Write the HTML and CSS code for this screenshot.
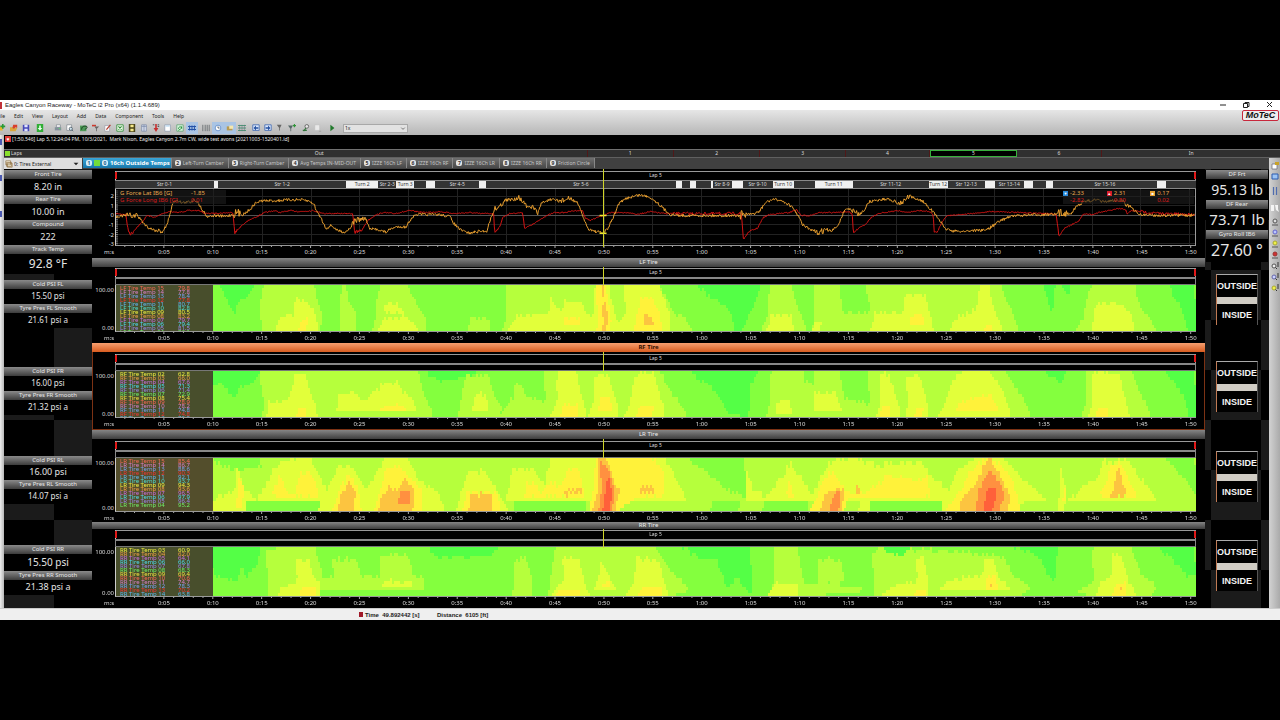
FILE: index.html
```html
<!DOCTYPE html>
<html lang="en">
<head>
<meta charset="utf-8">
<title>Eagles Canyon Raceway - MoTeC i2 Pro</title>
<link rel="stylesheet" href="styles.css">
</head>
<body>
<div class="app">
  <header class="titlebar">
    <span class="app-mark"></span>
    <h1 class="app-title">Eagles Canyon Raceway - MoTeC i2 Pro (x64) (1.1.4.689)</h1>
    <div class="window-buttons">
      <button aria-label="Minimize"><svg viewBox="0 0 8 8"><path d="M1 4h6"/></svg></button>
      <button aria-label="Restore"><svg viewBox="0 0 8 8"><path d="M1.5 2.5h4v4h-4zM3 2.500V1.500h4v4H5.500"/></svg></button>
      <button aria-label="Close"><svg viewBox="0 0 8 8"><path d="M2 1l5 5M7 1L2 6"/></svg></button>
    </div>
  </header>

  <div class="chrome">
    <div class="chrome-left">
      <nav class="menu">
        <button>File</button><button>Edit</button><button>View</button><button>Layout</button><button>Add</button><button>Data</button><button>Component</button><button>Tools</button><button>Help</button>
      </nav>
      <div class="toolbar">
        <div class="tool-group first">
          <button aria-label="New"><svg viewBox="0 0 10 10"><path fill="#e8b52c" d="M0 3h5l1 5H0z"/><path fill="#2a9a34" d="M5 0h2v2h2v2H7v2H5V4H3V2h2z"/></svg></button>
          <button aria-label="Open"><svg viewBox="0 0 10 10"><path fill="#d9a63a" d="M0 4h4l1 1h4L7 9H0z"/><path fill="#d8402c" d="M4 1h5v4L7 4 5 6 3 5z"/></svg></button>
          <button aria-label="Save"><svg viewBox="0 0 10 10"><path fill="#4648b8" d="M1 1h8v8H1z"/><path fill="#dfe3ff" d="M3 1h4v3H3zM3 6h4v3H3z"/></svg></button>
        </div>
        <div class="tool-group">
          <button aria-label="Download"><svg viewBox="0 0 10 10"><path fill="#2fae35" d="M1 0h8v10H1z"/><path fill="#eaffea" d="M4 2h2v3h2L5 8 2 5h2z"/></svg></button>
        </div>
        <div class="tool-group spaced">
          <button aria-label="Print"><svg viewBox="0 0 10 10"><path fill="#fff" stroke="#68727c" stroke-width=".7" d="M3 1h5v3H3z"/><path fill="#83919b" d="M1 4h8v4H1z"/><path fill="#5d6" d="M6 5h2v1H6z"/></svg></button>
          <button aria-label="Preview"><svg viewBox="0 0 10 10"><path fill="#fff" stroke="#68727c" stroke-width=".7" d="M1 1h6v7H1z"/><circle cx="6" cy="6" r="2" fill="#cfe4ee" stroke="#4c5a66"/><path stroke="#4c5a66" d="M7.500 7.500L9 9"/></svg></button>
        </div>
        <div class="tool-group">
          <button aria-label="Track"><svg viewBox="0 0 10 10"><path fill="#4f9a58" d="M0 2h8v7H0z"/><path fill="none" stroke="#143b1c" stroke-width="1.200" d="M2 7c0-4 3-5 6-4s-1 3-2 4"/></svg></button>
          <button aria-label="Channels"><svg viewBox="0 0 10 10"><path fill="#cc3a2e" d="M0 1h5v2H0z"/><path fill="#666" d="M3 3h6L6 6v3H5V6z"/></svg></button>
          <button aria-label="Edit data"><svg viewBox="0 0 10 10"><path fill="#fff" stroke="#889" stroke-width=".7" d="M1 2h6v7H1z"/><path stroke="#b23a2a" stroke-width="1.500" d="M3 7l5-6"/></svg></button>
          <button aria-label="Spreadsheet"><svg viewBox="0 0 10 10"><path fill="#eefbe9" stroke="#2a8a34" d="M1 1h8v8H1z"/><path stroke="#2a8a34" stroke-width="1.300" d="M3 3l4 4M7 3L3 7"/></svg></button>
          <button aria-label="Film"><svg viewBox="0 0 10 10"><path fill="#4b4418" d="M1 0h8v10H1z"/><path fill="#f6e98a" d="M3 1h4v3H3zM3 6h4v3H3z"/></svg></button>
          <button aria-label="Columns"><svg viewBox="0 0 10 10"><path fill="#e8eefa" stroke="#7080a0" stroke-width=".8" d="M2 1h6v8H2z"/><path stroke="#7080a0" stroke-width=".8" d="M2 3h6M4 1v8M6 1v8"/></svg></button>
          <button aria-label="Sensors"><svg viewBox="0 0 10 10"><path fill="#c53030" d="M4 0h2v5h2L5 10 2 5h2z"/><path stroke="#333" d="M1 1h2M7 1h2M7 3h2"/></svg></button>
          <button aria-label="Document"><svg viewBox="0 0 10 10"><path fill="#fff" stroke="#8292a8" stroke-width=".8" d="M1 1h7v8H1z"/><path fill="#8ec2e8" d="M2 2h5v1H2z"/></svg></button>
          <button aria-label="Refresh"><svg viewBox="0 0 10 10"><path fill="#d7f4dd" stroke="#4a9a60" stroke-width=".8" d="M1 1h8v8H1z"/><path fill="none" stroke="#24903a" stroke-width="1.200" d="M3 6c0-3 4-3 4-1M7 3v3M3 8l3-2"/></svg></button>
          <button aria-label="Overlay" class="on"><svg viewBox="0 0 10 10"><path fill="none" stroke="#2452a8" stroke-width="1.300" d="M0 3h10M0 7h10M2 2v6M5 2v6M8 2v6"/></svg></button>
        </div>
        <div class="tool-group">
          <button aria-label="Grid"><svg viewBox="0 0 10 10"><path stroke="#606468" d="M1 1v8M4 1v8M6.500 1v8M9 1v8"/></svg></button>
          <button aria-label="Time" class="on"><svg viewBox="0 0 10 10"><circle cx="5" cy="5" r="3.500" fill="#fff" stroke="#5a88c8"/><path fill="none" stroke="#345" d="M5 3v2h2"/></svg></button>
          <button aria-label="Distance" class="on"><svg viewBox="0 0 10 10"><path fill="#b89a50" d="M1 3h7v5H1z"/><path fill="#f5e7ae" d="M4 2h5v4H4z"/></svg></button>
          <button aria-label="Zones"><svg viewBox="0 0 10 10"><path stroke="#4d9a78" stroke-width="1.300" d="M0 2h10M0 5h10M0 8h10"/><path stroke="#667" stroke-width=".6" d="M2 1v8M5 1v8M8 1v8"/></svg></button>
        </div>
        <div class="tool-group">
          <button aria-label="Previous lap"><svg viewBox="0 0 10 10"><path fill="#dce8fc" stroke="#3c66b0" d="M1 1h8v7H1z"/><path fill="#2450a0" d="M2 5l3-3v2h3v2H5v2z"/></svg></button>
          <button aria-label="Next lap"><svg viewBox="0 0 10 10"><path fill="#dce8fc" stroke="#3c66b0" d="M1 1h8v7H1z"/><path fill="#2450a0" d="M8 5L5 2v2H2v2h3v2z"/></svg></button>
          <button aria-label="Filter"><svg viewBox="0 0 10 10"><path fill="#666" d="M1 1h6L5 5v3H4V5z"/></svg></button>
          <button aria-label="Add filter"><svg viewBox="0 0 10 10"><path fill="#566" d="M0 2h6L4 6v3H3V6z"/><path stroke="#2f9438" stroke-width="1.400" d="M6 2h4M8 0v4"/></svg></button>
        </div>
        <div class="tool-group">
          <button aria-label="Driver"><svg viewBox="0 0 10 10"><circle cx="6" cy="3" r="2.300" fill="#e8e8e8" stroke="#555"/><path stroke="#2f7438" stroke-width="1.400" d="M1 8h5M5 5L2 9"/></svg></button>
          <button aria-label="Notes"><svg viewBox="0 0 10 10"><path fill="#e9e9e9" stroke="#bbb" stroke-width=".6" d="M1 1h6v7H1z"/><path stroke="#999" d="M6 9h3"/></svg></button>
        </div>
        <div class="tool-group"><button aria-label="Play"><svg viewBox="0 0 10 10"><path fill="#217a2c" d="M3 1l5 4-5 4z"/></svg></button></div>
        <span class="speed"><select aria-label="Playback speed"><option>1x</option></select><svg viewBox="0 0 8 8"><path d="M2 3l2 2 2-2"/></svg></span>
      </div>
    </div>
    <span class="brand">MoTeC</span>
  </div>

  <div class="workspace">
    <aside class="rail-left"><i></i><i></i><i></i></aside>
    <div class="work">
      <p class="session"><span class="session-mark">♥</span><span>[1:50.546] Lap 5,12:24:04 PM, 10/3/2021,&nbsp; Mark Nixon, Eagles Canyon 2.7m CW, wide test avons [20211003-1520401.ld]</span></p>
      <div class="laps"><span class="laps-name">Laps</span><ol class="laps-track" id="laps"></ol></div>
      <div class="under-laps">
        <div class="sheet">
          <div class="tab-row">
            <span class="workbook"><svg viewBox="0 0 10 10"><path fill="#f6f0dc" stroke="#8a6a3a" stroke-width=".8" d="M1 1h6v5H1zM2 3h6v5H2zM3 4h6v5H3z"/></svg><select aria-label="Workbook"><option>0: Tires External</option></select><svg class="drop" viewBox="0 0 10 10"><path fill="#222" d="M1 3h8L5 7z"/></svg></span>
            <nav class="tabs" id="tabs"></nav>
          </div>
          <main class="panels">
            <div class="gauges gauges-left">
              <dl class="g-top">
                <dt>Front Tire</dt><dd>8.20 in</dd>
                <dt>Rear Tire</dt><dd>10.00 in</dd>
                <dt>Compound</dt><dd>222</dd>
                <dt>Track Temp</dt><dd class="t12 h20">92.8 °F</dd>
              </dl>
              <dl class="g-fl"><dt>Cold PSI FL</dt><dd class="t8 h15">15.50 psi</dd><dt>Tyre Pres FL Smooth</dt><dd class="t8 h15">21.61 psi a</dd></dl>
              <dl class="g-fr"><dt>Cold PSI FR</dt><dd class="t8 h15">16.00 psi</dd><dt>Tyre Pres FR Smooth</dt><dd class="t8 h15">21.32 psi a</dd></dl>
              <dl class="g-rl"><dt>Cold PSI RL</dt><dd class="h15">16.00 psi</dd><dt>Tyre Pres RL Smooth</dt><dd class="t8 h15">14.07 psi a</dd></dl>
              <dl class="g-rr"><dt>Cold PSI RR</dt><dd class="t10 h17">15.50 psi</dd><dt>Tyre Pres RR Smooth</dt><dd class="h15">21.38 psi a</dd></dl>
            </div>

            <div class="traces" id="traces"></div>

            <div class="gauges gauges-right">
              <dl class="r-top">
                <dt>DF Frt</dt><dd class="t14 h21">95.13 lb</dd>
                <dt>DF Rear</dt><dd class="t15 h21">73.71 lb</dd>
                <dt>Gyro Roll IB6</dt><dd class="t16 h23">27.60 °</dd>
              </dl>
              <div class="side s1"><b>OUTSIDE</b><hr><b>INSIDE</b></div>
              <div class="side s2"><b>OUTSIDE</b><hr><b>INSIDE</b></div>
              <div class="side s3"><b>OUTSIDE</b><hr><b>INSIDE</b></div>
              <div class="side s4"><b>OUTSIDE</b><hr><b>INSIDE</b></div>
            </div>
          </main>
        </div>
        <aside class="rail-right">
          <button aria-label="Properties"><svg viewBox="0 0 8 8"><path fill="#fff" stroke="#667" stroke-width=".7" d="M1 2h5v5H1z"/><path fill="#c9a227" d="M4 0h4v3H4z"/></svg></button>
          <button aria-label="Display"><svg viewBox="0 0 8 8"><path fill="#9cc4f4" stroke="#2c5cb0" d="M1 1h6v5H1z"/></svg></button>
          <button aria-label="Pause" class="tall"><svg viewBox="0 0 8 8"><path stroke="#4f6cae" stroke-width="1.200" d="M2.500 0v8M5.500 0v8"/></svg></button>
          <button aria-label="Cursor" class="tall"><svg viewBox="0 0 8 8"><path fill="#f4f4f4" d="M0 1h3v6H0zM4 1h3v4l1 3-3-2z"/></svg></button>
          <button aria-label="Find"><svg viewBox="0 0 8 8"><circle cx="4" cy="3" r="2" fill="#ddd" stroke="#555"/><path stroke="#555" d="M1 7h6"/></svg></button>
          <button aria-label="Find blue"><svg viewBox="0 0 8 8"><circle cx="4" cy="3" r="2" fill="#b9c6ff" stroke="#66c"/><path stroke="#555" d="M1 7h6"/></svg></button>
          <button aria-label="Find yellow"><svg viewBox="0 0 8 8"><circle cx="4" cy="3" r="2" fill="#eef04a" stroke="#aa3"/><path stroke="#555" d="M1 7h6"/></svg></button>
          <button aria-label="Find red"><svg viewBox="0 0 8 8"><circle cx="4" cy="3" r="2" fill="#d03030" stroke="#933"/><path stroke="#555" d="M1 7h6"/></svg></button>
          <button aria-label="Zoom in"><svg viewBox="0 0 8 8"><circle cx="3" cy="4" r="2" fill="#eee" stroke="#555"/><path stroke="#333" d="M4.500 5.500L6 7M7 0v5"/></svg></button>
          <button aria-label="Zoom out"><svg viewBox="0 0 8 8"><circle cx="3" cy="4" r="2" fill="#ccd4ff" stroke="#66a"/><path stroke="#333" d="M4.500 5.500L6 7M7 0v5"/></svg></button>
          <button aria-label="Zoom fit"><svg viewBox="0 0 8 8"><circle cx="3" cy="4" r="2" fill="#eef04a" stroke="#aa3"/><path stroke="#333" d="M4.500 5.500L6 7M7 0v5"/></svg></button>
        </aside>
      </div>
    </div>
  </div>

  <footer class="status"><span class="status-mark"></span><span class="status-time">Time&nbsp; 49.892442 [s]</span><span class="status-dist">Distance&nbsp; 6105 [ft]</span></footer>
</div>
<script src="app.js"></script>
</body>
</html>
```
FILE: styles.css
```css
* { box-sizing: border-box; }

body {
  margin: 0;
  min-height: 100vh;
  display: flex;
  flex-direction: column;
  justify-content: center;
  background: #000;
  color: #ddd;
  font: 6px/8px "Noto Sans", "Open Sans", sans-serif;
  overflow-x: hidden;
}

button, select { font: inherit; color: inherit; border: 0; padding: 0; margin: 0; background: none; }
h1, h2, p, dl, dd, ol { margin: 0; padding: 0; }
ol { list-style: none; }
svg { display: block; }

.app { width: 100%; }

/* window frame */
.titlebar {
  display: flex;
  align-items: center;
  height: 10px;
  background: #fff;
  color: #222;
}
.app-mark { width: 2px; height: 7px; background: #c03038; margin-right: 3px; }
.app-title { font: 400 6px/8px "Liberation Sans", sans-serif; }
.window-buttons { margin-left: auto; display: flex; gap: 15px; padding-right: 7px; }
.window-buttons svg { width: 8px; height: 8px; fill: none; stroke: #222; stroke-width: 1; }

.chrome {
  display: flex;
  justify-content: space-between;
  height: 25px;
  background: linear-gradient(#e6e6e6, #b6b6b6);
  color: #222;
}
.menu { display: flex; gap: 9px; height: 12px; font-size: 5px; line-height: 11px; margin-left: -3px; }
.brand {
  align-self: flex-start;
  margin: 0 1px;
  width: 37px;
  height: 11px;
  border: 1px solid #c8283c;
  border-radius: 2px;
  background: #eee;
  color: #111;
  font: italic 700 9px/9px "Liberation Sans", sans-serif;
  text-align: center;
}
.toolbar { display: flex; align-items: center; gap: 2px; height: 12px; }
.tool-group { display: flex; }
.tool-group.first { margin-left: -4px; }
.tool-group.spaced { margin-left: 4px; }
.toolbar button { width: 12px; height: 12px; display: grid; place-items: center; }
.toolbar button.on { background: #a9c4e4; }
.toolbar svg { width: 8px; height: 8px; }
.speed {
  display: flex;
  align-items: center;
  width: 65px;
  height: 9px;
  margin-left: 3px;
  border: 1px solid #a8a8a8;
  background: #e2e2e2;
}
.speed select { flex: 1; height: 7px; padding-left: 1px; font-size: 5px; line-height: 7px; appearance: none; }
.speed svg { width: 8px; height: 7px; fill: none; stroke: #666; }

/* workspace */
.workspace { display: flex; background: #000; }
.rail-left {
  flex: none;
  width: 4px;
  background: linear-gradient(90deg, #eee, #b8b8b8);
  display: flex;
  flex-direction: column;
  gap: 30px;
  padding-top: 4px;
}
.rail-left i { width: 2px; height: 6px; background: #4a58b0; }
.work { flex: 1; min-width: 0; }
.session { display: flex; gap: 1px; height: 14px; font-size: 5px; line-height: 8px; color: #eee; padding-left: 1px; white-space: nowrap; }
.session-mark { width: 6px; height: 6px; margin-top: 1px; background: #e03a34; color: #fff; line-height: 6px; text-align: center; }
.laps { display: flex; height: 9px; background: #303030; border-top: 1px solid #707070; border-bottom: 1px solid #606060; line-height: 7px; font-size: 5px; }
.laps-name { width: 48px; }
.laps-name::before { content: ""; display: inline-block; width: 5px; height: 5px; margin: 0 1px; background: #8ae02c; vertical-align: middle; }
.laps-track { flex: 1; display: flex; }
.laps-track li { text-align: center; border-right: 1px solid #501818; overflow: hidden; min-width: 0; }
.laps-track li.current { border: 1px solid #38b03c; background: #000; line-height: 5px; }
.laps-track li:last-child { border: 0; }
.under-laps { display: flex; }
.sheet { flex: 1; min-width: 0; }
.rail-right { flex: none; width: 11px; padding-top: 2px; background: linear-gradient(90deg, #d2d2d2, #aaa); }
.rail-right button { display: grid; place-items: center; width: 11px; height: 11px; }
.rail-right button.tall { height: 17px; }
.rail-right svg { width: 8px; height: 8px; }

.tab-row { display: flex; height: 11px; background: #404040; }
.workbook { display: flex; align-items: center; width: 78px; margin-right: 1px; height: 11px; background: #dedede; color: #222; }
.workbook svg { width: 8px; height: 8px; margin: 0 1px; }
.workbook .drop { width: 6px; height: 6px; margin-right: 3px; }
.workbook select { flex: 1; min-width: 0; height: 11px; font-size: 5px; line-height: 10px; appearance: none; }
.tabs { display: flex; height: 11px; font-size: 5px; }
.tabs button {
  display: flex;
  align-items: center;
  gap: 2px;
  height: 10px;
  padding: 0 4px 0 3px;
  border-right: 1px solid #888;
  background: linear-gradient(#707070, #484848);
  color: #c8c8c8;
  white-space: nowrap;
}
.tabs button.active { background: linear-gradient(#3aa6d8, #1878ac); color: #fff; font-weight: 700; font-size: 6px; padding: 0 1px 0 3px; }
.tabs .num { width: 6px; height: 6px; border-radius: 2px; background: #e4e4e4; color: #333; font-size: 5px; font-weight: 700; line-height: 6px; text-align: center; }
.tabs .active .num { background: #d6ecf8; color: #14608c; }
.tabs .lamp { width: 6px; height: 6px; background: #72dc3a; }

.panels { display: flex; }

/* gauges */
.gauges {
  flex: none;
  text-align: center;
  --lit: #1b1b1b;
  background: conic-gradient(#000 25%, var(--lit) 0 50%, #000 0 75%, var(--lit) 0) 0 1px / 100px 100px;
}
.gauges dl { background: #000; }
.gauges dt { height: 9px; line-height: 8px; font-size: 6px; background: linear-gradient(#8a8a8a, #3c3c3c); color: #e8e8e8; white-space: nowrap; }
.gauges dd { height: 16px; line-height: 15px; font-size: 9px; color: #e4e4e4; white-space: nowrap; }
.gauges .t8 { font-size: 8px; }
.gauges .t10 { font-size: 10px; }
.gauges .t12 { font-size: 12px; }
.gauges .t14 { font-size: 14px; }
.gauges .t15 { font-size: 15px; }
.gauges .t16 { font-size: 16px; }
.gauges .h15 { height: 15px; line-height: 14px; }
.gauges .h17 { height: 17px; line-height: 17px; }
.gauges .h20 { height: 20px; line-height: 20px; }
.gauges .h21 { height: 21px; line-height: 21px; }
.gauges .h23 { height: 23px; line-height: 23px; }
.gauges-left { width: 88px; padding-top: 1px; }
.g-fl { margin-top: 6px; }
.g-fr { margin-top: 39px; }
.g-rl { margin-top: 41px; }
.g-rr { margin-top: 41px; }
.gauges-right { width: 64px; padding: 1px 1px 0; background-position: 6px 1px; }
.side {
  width: 42px;
  margin: 0 auto;
  border-top: 1px solid #aaa;
  border-right: 1px solid #555;
  border-left: 1px solid #c07a54;
  background: #000;
  color: #f4f4f4;
  font: 700 9px/22px "Liberation Sans", sans-serif;
  height: 51px;
}
.side b { display: block; height: 22px; }
.side hr { height: 7px; margin: 0; border: 0; background: #d0ccc4; }
.s1 { margin-top: 12px; }
.s2 { margin-top: 36px; }
.s3 { margin-top: 39px; }
.s4 { margin-top: 38px; }

/* traces */
.traces { flex: 1; min-width: 0; }
.trace-title { height: 9px; font-size: 6px; line-height: 8px; font-weight: 400; text-align: center; background: linear-gradient(#858585, #3e3e3e); color: #eee; }
.trace-body { position: relative; margin: 0 9px 0 23px; padding-top: 2px; }
.trace-lf .trace-body, .trace-rr .trace-body { padding-top: 1px; }
.trace-rr .trace-title { height: 7px; line-height: 6px; }
.trace.active { box-shadow: inset 0 0 0 1px #7c3214; }
.trace.active .trace-title { background: linear-gradient(#f8a070, #d85c20); color: #301000; font-weight: 700; }
.lapbar { display: flex; justify-content: center; height: 9px; border: 1px solid #999; border-bottom: 0; border-left-color: #ccc; line-height: 7px; font-size: 5px; position: relative; }
.lapbar::before, .lapbar::after { content: ""; position: absolute; top: 0; left: -1px; width: 2px; height: 7px; background: #e01818; }
.lapbar::after { left: auto; right: -1px; }
.band { height: 8px; border: 1px solid #888; border-top-width: 2px; border-bottom-color: #777; }
.sections { display: flex; height: 9px; border: solid #888; border-width: 1px 0; background: #333; line-height: 7px; font-size: 5px; }
.sections span { overflow: hidden; text-align: center; white-space: nowrap; }
.sections .corner { background: #f0f0f0; color: #333; }
.plot { position: relative; overflow: hidden; border-left: 1px solid #ccc; border-bottom: 1px solid #999; }
.plot canvas, .plot svg { display: block; width: 100%; height: 100%; }
.plot canvas { image-rendering: pixelated; }
.plot-g { height: 57px; border-right: 1px solid #999; }
.plot-lf, .plot-rf { height: 47px; }
.plot-lr { height: 54px; }
.plot-rr { height: 50px; }
.axis { position: relative; height: 11px; }
.axis-g, .axis-rf { height: 12px; }
.axis-lr { height: 10px; }
.axis svg { width: 100%; height: 3px; }
.axis span { position: absolute; top: 2px; line-height: 8px; transform: translateX(-50%); }
.axis .unit { transform: none; left: -11px; }
.ylab { position: absolute; right: calc(100% + 1px); line-height: 6px; }
.ylab.hi { top: 2px; }
.ylab.lo { bottom: 1px; }
.plot-wrap { position: relative; }
.cursor { position: absolute; top: 0; bottom: 11px; left: 45.1%; width: 1px; background: #d0d428; }
.trace.heat .cursor { bottom: auto; height: 19px; }
.legend {
  position: absolute;
  inset: 0 auto 0 0;
  width: 9%;
  padding: 1px 0 0 4px;
  background: rgba(55, 28, 40, .78);
  overflow: hidden;
}
.legend li { display: flex; height: 4px; line-height: 5px; white-space: nowrap; }
.legend li span:first-child { width: 58px; }
.readout { position: absolute; top: 1px; left: 0; width: 110px; padding-left: 4px; background: rgba(30, 30, 30, .6); }
.readout div { display: flex; height: 7px; line-height: 7px; white-space: nowrap; }
.readout div span:first-child { width: 71px; }
.lat { color: #e8a850; }
.long { color: #d81c1c; }
.stats { position: absolute; top: 1px; right: 1px; width: 131px; display: grid; grid-template-columns: repeat(3, 1fr); background: rgba(30, 30, 30, .6); line-height: 7px; }
.stats span { padding-left: 7px; position: relative; }
.stats span::before { position: absolute; left: 0; top: 1px; width: 5px; height: 5px; line-height: 5px; font-size: 4px; color: #fff; text-align: center; }
.stats .min::before { content: "▼"; background: #2888d8; }
.stats .max::before { content: "▲"; background: #d81c28; }
.stats .avg::before { content: "■"; background: #e8a030; }

/* status bar */
.status { display: flex; align-items: center; height: 12px; padding-left: 359px; background: #efefef; border-top: 1px solid #ccc; color: #222; font: 700 6px/10px "Liberation Sans", sans-serif; }
.status-mark { width: 4px; height: 5px; margin-right: 2px; background: #a01828; }
.status-time { width: 72px; }
```
FILE: app.js
```js
const START = 116, END = 1196, SPAN = END - START;
const el = (tag, cls, html = '') => {
  const n = document.createElement(tag);
  if (cls) n.className = cls;
  n.innerHTML = html;
  return n;
};

let seed = 7;
const rnd = () => { seed = (seed * 16807) % 2147483647; return seed / 2147483647; };

/* lap strip: label, relative length */
[['Out', 538], ['1', 86], ['2', 86], ['3', 85], ['4', 84], ['5', 85], ['6', 85], ['In', 179]].forEach(([name, w]) => {
  const li = el('li', name === '5' ? 'current' : '', name);
  li.style.flex = w + ' 0 0';
  document.getElementById('laps').append(li);
});

['16ch Outside Temps', 'Left-Turn Camber', 'Right-Turn Camber', 'Avg Temps IN-MID-OUT', 'IZZE 16Ch LF', 'IZZE 16Ch RF',
  'IZZE 16Ch LR', 'IZZE 16Ch RR', 'Friction Circle'].forEach((t, i) => {
  const extra = i ? '' : '<span class="lamp"></span><span class="num">0</span>';
  document.getElementById('tabs').append(el('button', i ? '' : 'active', `<span class="num">${i + 1}</span>${extra}${t}`));
});

/* track sections: label, end position, corner flag */
const sections = [['Str 0-1', 215], ['', 219, 1], ['Str 1-2', 347], ['Turn 2', 379, 1], ['Str 2-3', 397], ['Turn 3', 415, 1], ['', 427],
  ['', 436, 1], ['Str 4-5', 480], ['', 487, 1], ['Str 5-6', 676], ['', 682, 1], ['', 690], ['', 696, 1], ['', 711], ['', 713, 1],
  ['Str 8-9', 732], ['', 743, 1], ['Str 9-10', 773], ['Turn 10', 794, 1], ['', 815], ['Turn 11', 853, 1], ['Str 11-12', 929],
  ['Turn 12', 948, 1], ['Str 12-13', 985], ['', 995, 1], ['Str 13-14', 1024], ['', 1033, 1], ['', 1046], ['', 1053, 1],
  ['Str 15-16', 1157], ['', 1166, 1], ['', 1196]];

/* lateral and longitudinal g: x,y pairs, plot rows 189..246 */
const lat = '116,217 126,216 138,216 142,222 148,228 155,231 162,232 167,226 170,214 173,203 177,200 182,203 190,202 195,199 200,206 207,217 215,216 225,217 233,215 237,213 243,215 250,210 256,203 262,201 275,201 290,200 300,200 308,201 314,204 317,212 321,218 326,229 332,226 337,231 345,233 350,229 355,221 360,220 366,219 370,230 378,230 386,233 392,229 400,227 406,228 412,218 418,215 430,215 440,215 450,217 455,225 461,231 470,234 480,232 487,232 490,222 495,209 500,207 505,201 512,200 519,197 524,203 529,209 534,207 538,214 542,203 550,200 560,201 570,199 577,202 582,213 588,229 595,232 603,234 608,230 615,215 619,204 628,198 640,195 650,197 658,203 665,210 671,215 680,216 700,216 720,216 741,216 743,215 752,215 760,212 766,203 772,200 780,200 790,205 797,213 803,225 810,230 818,234 825,231 832,232 838,227 843,216 846,209 852,210 857,214 860,215 865,210 870,202 880,200 890,199 900,204 905,201 909,197 917,199 923,201 930,208 936,215 940,220 945,229 955,232 965,232 975,231 985,231 990,229 1000,222 1010,217 1020,216 1040,215 1058,215 1062,213 1067,214 1073,213 1078,206 1085,202 1095,200 1105,202 1115,201 1122,200 1128,205 1134,210 1141,215 1160,216 1180,216 1196,216';
const long = '116,214 126,215 128,231 131,235 136,229 142,223 147,216 155,218 162,214 170,212 178,213 188,211 200,211 205,214 233,213 235,234 240,228 247,222 255,218 265,213 275,211 280,213 290,211 300,212 313,211 325,214 340,214 353,214 355,234 362,231 368,221 375,216 383,213 395,214 410,211 425,213 440,212 455,214 470,213 480,214 494,214 495,233 500,228 503,218 510,214 523,213 525,229 535,224 545,217 555,213 565,213 575,211 583,211 586,219 591,221 600,217 612,213 630,213 638,215 650,212 665,214 742,214 744,240 750,232 758,229 764,218 770,215 780,214 790,213 797,210 802,216 810,216 820,213 835,213 850,212 853,215 854,234 860,228 866,225 872,218 880,214 890,212 900,211 907,213 920,211 930,212 934,215 935,233 938,233 943,222 948,216 960,215 975,214 990,212 1000,212 1020,213 1050,214 1057,215 1060,238 1065,229 1073,225 1080,221 1085,214 1093,215 1100,213 1110,211 1120,209 1127,210 1128,215 1132,211 1142,212 1160,214 1196,215';
/* spans where the signal is rough: from, to, amplitude */
const latRough = [[126, 140, 6], [158, 166, 6], [190, 196, 5], [234, 240, 8], [352, 364, 6], [494, 536, 5], [555, 572, 6], [600, 606, 4], [741, 747, 9], [815, 828, 6], [852, 860, 7], [900, 912, 5], [1058, 1068, 9], [1123, 1132, 6]];
const longRough = [[126, 133, 4], [235, 238, 4], [355, 362, 5], [672, 741, 3], [742, 746, 5], [1058, 1062, 4], [1142, 1196, 3]];

function linePath(text, base, spots) {
  const p = text.split(' ').map(s => s.split(',').map(Number));
  let d = '', k = 0;
  for (let x = START; x <= END; x += 0.7) {
    while (k < p.length - 2 && p[k + 1][0] < x) k++;
    const [x0, y0] = p[k], [x1, y1] = p[k + 1];
    const y = y0 + (y1 - y0) * Math.min(1, (x - x0) / (x1 - x0));
    const r = spots.find(s => x >= s[0] && x <= s[1]);
    const a = r ? r[2] : base;
    d += (d ? 'L' : 'M') + (x - START).toFixed(1) + ' ' + (y - 189 + (rnd() - 0.5) * a).toFixed(1);
  }
  return d;
}

/* temperature bands, low to high */
const scale = [[84, 255, 70], [132, 255, 62], [182, 255, 60], [226, 255, 58], [255, 242, 58], [252, 196, 64], [255, 144, 64], [255, 96, 58]];

/* each region: band, then x,y corners; y is percent of plot height */
const heat = {
  lf: [1, [
    '0 222,0 256,0 248,25 237,40 232,65 228,30', '2 262,100 258,60 265,0 316,0 320,60 320,100', '2 340,100 339,60 344,0 348,0 350,40 355,60 355,100',
    '2 372,100 376,40 382,0 410,0 420,55 425,75 425,100', '3 275,100 278,70 292,65 296,30 304,30 312,50 318,100', '4 298,100 300,72 306,72 306,100', '3 378,100 382,70 400,70 400,50 405,70 420,100', '3 383,60 386,40 397,40 400,60',
    '2 467,100 470,70 487,70 490,100', '2 502,100 505,60 508,0 662,0 673,60 682,70 692,100', '3 507,100 515,65 540,65 547,60 552,30 560,60 565,35 580,35 585,60 593,70 597,0 612,0 612,40 618,100', '3 612,100 625,60 626,0 662,0 668,60 670,100',
    '4 563,85 563,68 578,68 578,85', '4 596,100 598,0 608,0 610,100', '5 602,100 601,45 606,40 606,100', '5 603,20 603,0 605,0 605,20', '4 633,100 636,60 642,30 653,30 658,60 661,100', '5 642,85 642,62 647,65 652,85',
    '0 697,0 762,0 757,30 748,60 742,100 733,100 730,60 715,30', '2 760,100 768,60 772,0 793,0 798,60 807,100', '3 766,100 770,65 790,65 793,100', '2 812,100 812,70 816,0 842,0 842,60 870,60 868,0 1003,0 1010,50 1018,100',
    '3 870,100 873,60 903,60 907,20 927,20 928,60 933,100', '4 908,85 908,65 923,65 923,85', '3 948,100 955,70 975,55 982,0 991,0 994,60 1003,100', '4 983,100 985,85 992,85 992,100', '3 812,100 814,80 820,80 820,100',
    '0 1045,0 1057,0 1054,50 1050,50', '0 1062,0 1073,0 1070,20', '2 1075,100 1085,50 1093,0 1137,0 1140,50 1157,100', '3 1091,100 1092,60 1100,40 1118,40 1130,60 1133,100', '0 1170,0 1196,0 1196,100 1187,100 1180,45']],
  rf: [1, [
    '0 213,0 263,0 255,25 240,35 233,60 225,30 213,25', '2 262,100 262,0 420,0 425,60 433,100', '3 266,100 267,65 285,65 293,40 297,5 308,5 310,50 317,100', '4 296,100 297,80 305,80 305,100', '3 335,88 338,50 355,45 362,70 372,50 380,40 380,25 400,25 402,45 412,60 415,88', '4 378,88 383,75 402,75 405,88',
    '0 427,0 480,0 470,12 440,20', '2 457,100 460,60 468,10 490,10 495,60 500,80 500,100', '3 470,88 474,50 484,50 488,88', '2 500,100 505,70 513,60 514,30 523,30 525,60 547,65 547,100', '2 545,100 545,0 662,0 672,50 687,100', '3 549,100 556,60 560,0 578,0 581,50 585,100', '4 560,100 562,70 577,70 578,100', '3 588,100 593,50 595,10 610,10 614,50 618,100', '4 597,85 599,55 609,55 610,85',
    '3 623,100 630,60 637,5 656,5 660,60 664,100', '4 635,100 638,78 652,78 652,100', '0 690,0 760,0 750,40 747,100 725,90 715,40', '2 766,100 770,40 773,0 842,0 844,60 869,70 869,0 1008,0 1020,50 1031,100', '1 806,20 806,0 815,0 815,30', '3 774,95 776,65 788,65 791,95', '3 812,90 815,45 835,50 841,90', '1 843,60 843,0 869,0 869,60',
    '3 876,100 880,50 881,5 891,5 895,50 900,100', '4 879,100 881,75 889,75 890,100', '3 905,100 908,10 922,10 925,60 928,100', '4 914,100 915,80 922,80 922,100', '3 938,100 945,60 955,20 965,0 990,0 998,20 1005,60 1010,100', '4 953,88 960,65 978,52 990,52 998,88',
    '0 1046,0 1070,0 1062,20 1050,10', '2 1081,100 1086,40 1088,0 1134,0 1140,50 1150,100', '3 1088,100 1092,50 1095,0 1122,10 1124,60 1129,100', '4 1095,100 1097,80 1106,80 1108,100', '0 1167,0 1196,0 1196,100 1188,100 1180,40']],
  lr: [2, [
    '1 213,0 262,0 262,15 240,25 220,12', '3 213,100 213,80 233,60 237,15 243,60 257,80 267,40 283,5 312,0 318,30 325,60 327,50 340,15 353,20 363,60 380,20 385,0 410,0 417,40 433,60 447,100', '4 236,95 237,40 241,40 243,95', '4 270,75 278,30 287,65 293,70 299,30 312,30 318,75', '1 247,100 247,84 320,84 320,100', '4 333,100 340,50 348,35 355,50 363,100', '4 375,100 380,50 385,20 400,15 412,40 420,60 423,100', '5 339,100 340,65 348,50 354,65 355,100',
    '5 380,100 380,75 386,60 386,38 388,60 397,60 402,38 409,45 414,70 414,100', '6 398,90 399,60 408,60 410,90', '3 457,100 460,60 470,25 485,25 495,60 510,100', '4 463,100 466,65 497,65 501,100', '5 470,100 470,68 490,68 493,100', '3 505,82 509,40 513,20 533,20 543,50 553,0 665,0 670,20 687,82', '1 515,100 515,84 587,84 587,100', '4 523,75 525,45 535,50 540,70 546,50 562,50 567,20 578,20 583,75', '4 590,100 592,50 597,0 653,0 663,20 662,75 633,78 620,100',
    '5 593,100 597,50 600,0 608,0 613,50 620,60 616,85 617,100', '6 600,100 600,10 607,10 612,60 614,100', '7 604,100 604,40 608,40 611,75 611,100', '5 563,68 565,60 580,58 580,68', '5 637,68 640,56 653,54 653,68', '1 690,0 745,0 745,75 725,60 705,25', '1 712,100 712,84 740,84 740,100', '3 745,80 745,20 752,60 768,75 778,40 792,10 800,35 809,70 823,30 833,5 854,0 878,15 922,5 933,40 947,60 960,20 978,0 1005,0 1022,40 1046,80 1020,85 1020,100 860,100 860,82 810,82',
    '1 764,100 764,84 809,84 809,100', '1 871,100 871,84 943,84 943,100', '4 785,75 787,40 793,75', '4 810,100 823,40 833,25 843,60 864,70 885,35 915,40 926,35 930,76 847,78 845,100', '4 946,100 960,60 967,30 988,0 1000,10 1008,30 1015,70 1022,100', '5 821,100 824,70 835,55 843,65 843,100', '6 831,100 833,65 840,65 840,100', '5 855,75 855,52 858,52 858,75',
    '5 960,100 962,70 974,50 988,3 993,3 1005,60 1010,75 1008,100', '6 976,100 977,65 986,30 994,30 1004,70 1000,100', '7 985,100 985,60 993,55 996,75 993,100', '3 1058,100 1060,5 1064,60 1066,100', '3 1066,82 1084,50 1100,30 1105,5 1130,5 1140,40 1157,82', '4 1062,80 1063,50 1065,80', '4 1098,75 1108,30 1112,10 1122,10 1130,50 1136,75', '5 1108,75 1112,55 1116,22 1120,22 1122,55 1126,75', '1 1167,0 1196,0 1196,80 1185,40']],
  rr: [1, [
    '0 213,0 262,0 258,40 250,50 245,60 240,40 235,70 228,65 213,60', '2 267,100 267,10 280,0 317,0 322,60 423,60 423,88 320,88 320,100', '3 277,100 280,80 295,75 298,25 310,25 312,60 319,75 319,100', '4 299,100 300,82 315,82 315,100', '2 332,60 334,25 358,25 360,60', '2 378,65 382,15 410,15 413,65', '3 380,82 384,68 410,68 410,82', '0 427,0 500,0 490,20 440,22', '2 511,100 515,25 528,25 532,100', '2 547,100 550,60 557,0 658,0 668,40 688,88 672,100',
    '3 551,100 555,80 563,70 564,25 580,25 583,75 590,100', '4 555,100 557,86 580,86 580,100', '3 592,90 598,60 603,30 608,60 617,90', '4 600,84 602,70 607,70 609,84', '3 625,100 632,70 638,25 660,25 662,70 668,100', '4 636,100 640,84 660,84 662,100', '0 683,0 752,0 750,100 742,80 735,60 725,85 718,30 700,20', '2 768,100 772,70 776,0 800,0 802,75 860,80 860,92 804,100', '3 768,100 772,75 796,75 798,100', '2 817,75 818,25 842,25 843,75', '2 873,100 873,20 880,0 990,15 1005,20 1012,60 1029,82 1020,100', '0 885,0 912,0 905,18 890,12',
    '3 881,100 890,80 915,70 918,22 925,22 928,100', '4 914,100 916,85 926,85 926,100', '3 938,85 950,65 983,55 986,22 994,22 997,60 1008,85', '4 984,85 986,58 994,58 996,85', '5 989,82 989,70 991,70 991,82', '0 1015,0 1060,0 1055,60 1050,70 1040,20', '2 1076,92 1092,70 1095,0 1132,0 1140,50 1155,85 1150,100 1092,100', '3 1095,100 1098,75 1112,60 1113,15 1123,15 1127,70 1137,100', '4 1112,100 1114,75 1124,75 1126,100', '5 1118,90 1118,80 1121,80 1121,90', '0 1157,0 1196,0 1196,60 1185,55 1175,30']]
};

function inside(poly, x, y) {
  let hit = false;
  for (let i = 0, j = poly.length - 1; i < poly.length; j = i++) {
    const [xi, yi] = poly[i], [xj, yj] = poly[j];
    if ((yi > y) !== (yj > y) && x < (xj - xi) * (y - yi) / (yj - yi) + xi) hit = !hit;
  }
  return hit;
}

function paintHeat(canvas, [base, regions]) {
  const cols = 540, rows = 16;
  canvas.width = cols;
  canvas.height = rows;
  const shapes = regions.map(r => {
    const [band, ...pts] = r.split(' ');
    return [+band, pts.map(p => p.split(',').map(Number))];
  });
  const ctx = canvas.getContext('2d');
  const img = ctx.createImageData(cols, rows);
  for (let c = 0; c < cols; c++) {
    const lift = (rnd() - 0.5) * 10;
    for (let r = 0; r < rows; r++) {
      const x = START + (c + 0.5) * SPAN / cols + Math.sin(r * 12.9 + base) * 1.6;
      const y = Math.max(1, Math.min(99, (r + 0.5) * 100 / rows + (r < 12 ? lift : 0)));
      let band = base;
      for (const [b, poly] of shapes) if (inside(poly, x, y)) band = b;
      img.data.set([...scale[band], 255], (r * cols + c) * 4);
    }
  }
  ctx.putImageData(img, 0, 0);
}

const legendColors = ['#7ca0f0', '#f03838', '#60b8f0', '#50dcd0', '#f0f040', '#f0a048', '#c870e0', '#50dcf0', '#9888e8', '#70f068', '#f0e040', '#f86858', '#d880c8'];
const readings = {
  lf: [15, -1, '79.8 77.8 78.4 77.8 80.7 82.8 80.5 83.2 79.7 79.4 81.5 83.1'],
  rf: [2, 1, '62.8 66.0 67.6 71.3 71.4 72.9 75.4 78.9 78.2 74.8 74.8 72.9'],
  lr: [15, -1, '85.4 86.7 88.6 90.3 92.1 93.7 94.3 93.6 96.5 97.9 96.4 95.2'],
  rr: [3, 1, '60.9 62.0 64.1 66.0 67.8 68.3 69.4 70.6 74.7 78.3 70.2 63.8']
};

function axis(id) {
  let marks = '';
  for (let t = 1; t <= 110; t++) marks += `M${(t / 110.546 * SPAN).toFixed(1)} 0V${t % 5 ? 1 : 2}`;
  const a = el('div', 'axis axis-' + id, `<svg viewBox="0 0 1080 3" preserveAspectRatio="none"><path d="${marks}" stroke="#aaa"/></svg><span class="unit">m:s</span>`);
  for (let t = 5; t <= 110; t += 5) {
    const s = el('span', '', Math.floor(t / 60) + ':' + String(t % 60).padStart(2, '0'));
    s.style.left = (t / 110.546 * 100).toFixed(2) + '%';
    a.append(s);
  }
  return a;
}

const traces = document.getElementById('traces');

/* g-force chart */
{
  const sec = el('section', 'trace');
  const body = el('div', 'trace-body', '<div class="lapbar">Lap 5</div>');
  const bar = el('div', 'sections');
  let from = START;
  sections.forEach(([name, to, corner]) => {
    const s = el('span', corner ? 'corner' : '', name);
    s.style.flex = (to - from) + ' 0 0';
    from = to;
    bar.append(s);
  });
  let grid = '';
  for (let t = 5; t <= 110; t += 5) grid += `M${(t / 110.546 * SPAN).toFixed(1)} 0V57`;
  for (let y = 7.5; y < 57; y += 9.6) grid += `M0 ${y.toFixed(1)}H1080`;
  let ticks = '';
  for (let y = 2; y < 57; y += 1.92) ticks += `M0 ${y.toFixed(1)}H2`;
  const wrap = el('div', 'plot-wrap');
  const plot = el('div', 'plot plot-g', `<svg viewBox="0 0 1080 57" preserveAspectRatio="none" fill="none">
    <path d="${grid}" stroke="#222" shape-rendering="crispEdges"/><path d="${ticks}" stroke="#ccc" stroke-width=".6"/>
    <path d="M0 27H1080" stroke="#555"/>
    <path d="${linePath(long, 1.2, longRough)}" stroke="#d81414"/>
    <path d="${linePath(lat, 3, latRough)}" stroke="#eaa030"/>
    <path d="M484 27h7M484 45h7" stroke="#f0e830" stroke-width="1.500"/></svg>
    <div class="readout"><div class="lat"><span>G Force Lat IB6 [G]</span><span>-1.85</span></div><div class="long"><span>G Force Long IB6 [G]</span><span>0.01</span></div></div>
    <div class="stats"><span class="lat min">-2.33</span><span class="lat max">2.31</span><span class="lat avg">0.17</span><span class="long">-2.82</span><span class="long">0.80</span><span class="long">0.02</span></div>`);
  wrap.append(plot);
  [2, 1, 0, -1, -2, -3].forEach((v, i) => {
    const l = el('span', 'ylab', String(v));
    l.style.top = (7 + i * 17) + '%';
    wrap.append(l);
  });
  body.append(bar, wrap, axis('g'), el('i', 'cursor'));
  sec.append(body);
  traces.append(sec);
}

['LF', 'RF', 'LR', 'RR'].forEach(name => {
  const id = name.toLowerCase();
  const sec = el('section', 'trace heat trace-' + id + (id === 'rf' ? ' active' : ''), `<h2 class="trace-title">${name} Tire</h2>`);
  const body = el('div', 'trace-body', '<div class="lapbar">Lap 5</div><div class="band"></div>');
  const wrap = el('div', 'plot-wrap', '<span class="ylab hi">100.00</span><span class="ylab lo">0.00</span>');
  const plot = el('div', 'plot plot-' + id);
  const canvas = el('canvas');
  paintHeat(canvas, heat[id]);
  const [first, step, values] = readings[id];
  const list = el('ol', 'legend');
  values.split(' ').forEach((v, i) => {
    const li = el('li', '', `<span>${name} Tire Temp ${String(first + i * step).padStart(2, '0')}</span><span>${v}</span>`);
    li.style.color = legendColors[(i + name.charCodeAt(0)) % legendColors.length];
    list.append(li);
  });
  plot.append(canvas, list);
  wrap.append(plot);
  body.append(wrap, axis(id), el('i', 'cursor'));
  sec.append(body);
  traces.append(sec);
});
```
